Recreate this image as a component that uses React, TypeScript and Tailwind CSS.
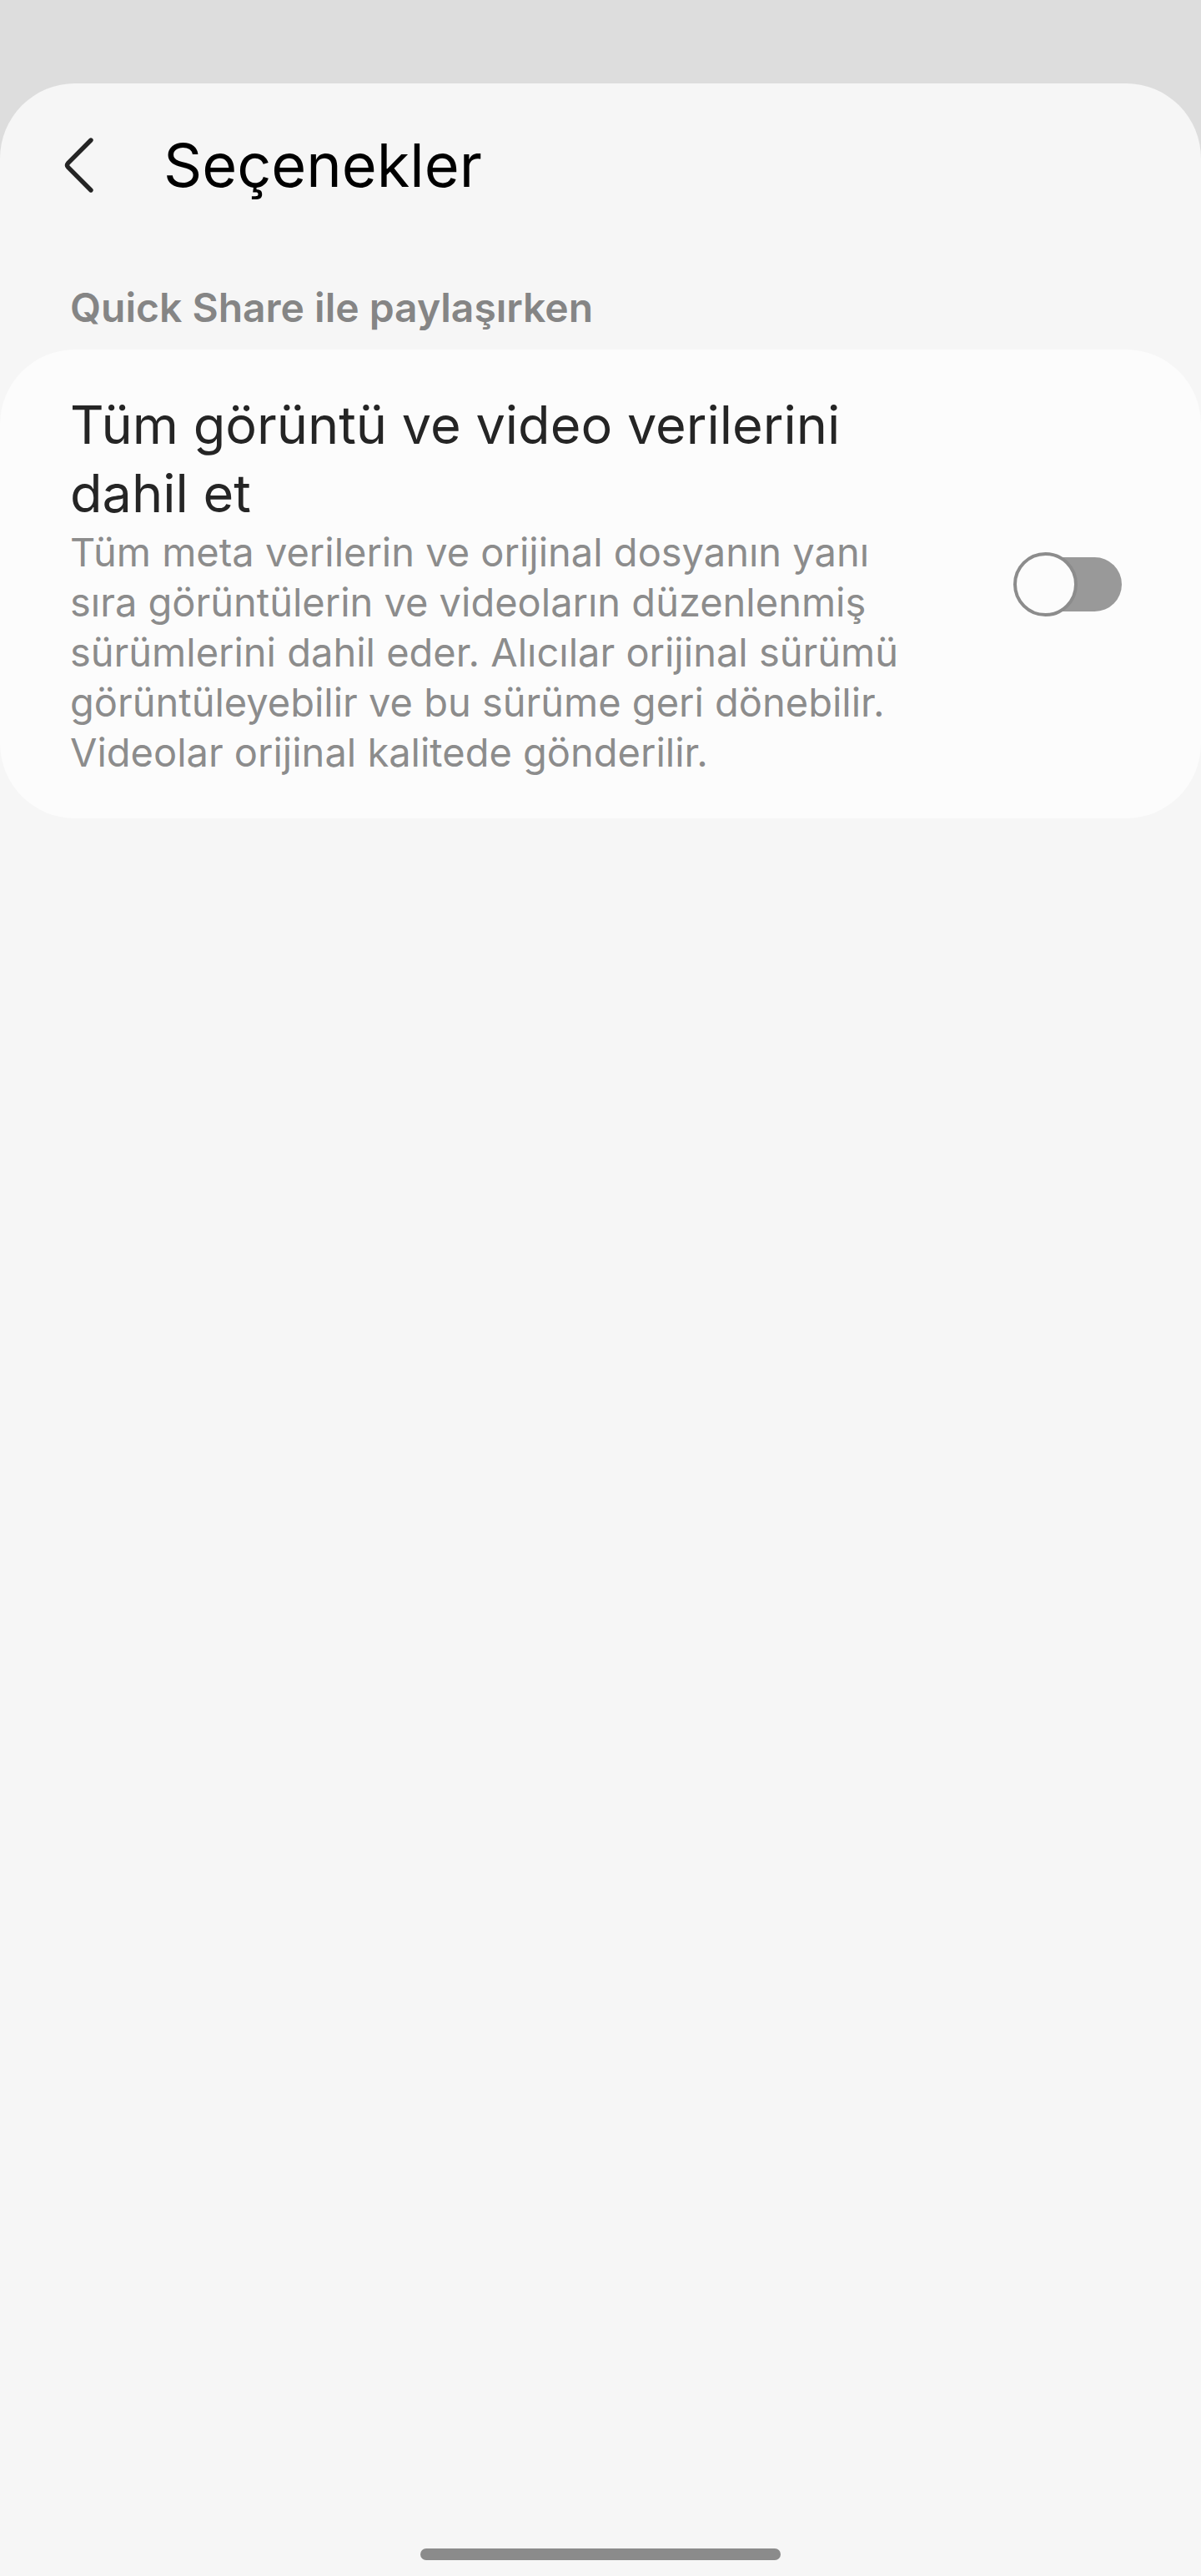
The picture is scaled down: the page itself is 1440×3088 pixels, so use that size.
import { useState } from 'react';

const content = {
  title: 'Seçenekler',
  section: 'Quick Share ile paylaşırken',
  optionTitle: 'Tüm görüntü ve video verilerini dahil et',
  optionDescription:
    'Tüm meta verilerin ve orijinal dosyanın yanı sıra görüntülerin ve videoların düzenlenmiş sürümlerini dahil eder. Alıcılar orijinal sürümü görüntüleyebilir ve bu sürüme geri dönebilir. Videolar orijinal kalitede gönderilir.',
};

export default function App() {
  const [includeAll, setIncludeAll] = useState(false);

  return (
    <div className="flex min-h-screen flex-col bg-[#dddddd] pt-[100px] font-[Inter,sans-serif]">
      <div className="flex flex-1 flex-col rounded-t-[90px] bg-[#f6f6f6]">
        {/* Header */}
        <header className="flex h-[196px] items-center pl-[62px]">
          <button type="button" aria-label="Geri" className="mr-[70px]">
            <svg width="64" height="80" viewBox="0 0 64 80" fill="none" className="block">
              <path
                d="M47 10 L19.5 37.7 Q17.5 40 19.5 42.3 L47 70"
                stroke="#252525"
                strokeWidth="5.4"
                strokeLinecap="round"
                strokeLinejoin="round"
              />
            </svg>
          </button>
          <h1 className="text-[72px] leading-[84px] text-black">{content.title}</h1>
        </header>

        {/* Options */}
        <main className="flex-1">
          <h2 className="px-[84px] pt-[43px] pb-5 text-[48px] leading-[60px] font-semibold text-[#858585]">
            {content.section}
          </h2>
          <section className="flex items-center justify-between rounded-[90px] bg-[#fcfcfc] py-[49px] pr-[95px] pl-[84px]">
            <label htmlFor="include-all" className="max-w-[1020px]">
              <span className="block text-[63px] leading-[82px] text-[#252525]">{content.optionTitle}</span>
              <span className="block text-[47px] leading-[60px] text-[#8c8c8c]">{content.optionDescription}</span>
            </label>
            <input
              id="include-all"
              type="checkbox"
              role="switch"
              checked={includeAll}
              onChange={(e) => setIncludeAll(e.target.checked)}
              className="relative h-[65px] w-[124px] shrink-0 appearance-none rounded-full bg-[#999999] before:absolute before:-top-[6px] before:-left-[6px] before:size-[77px] before:rounded-full before:border-4 before:border-[#8c8c8c] before:bg-[#fcfcfc] checked:bg-[#3e91ff] checked:before:right-[-6px] checked:before:left-auto"
            />
          </section>
        </main>

        {/* Gesture bar */}
        <footer className="flex justify-center pb-[19px]">
          <div className="h-[14px] w-[30%] rounded-full bg-[#8b8b8b]" />
        </footer>
      </div>
    </div>
  );
}
